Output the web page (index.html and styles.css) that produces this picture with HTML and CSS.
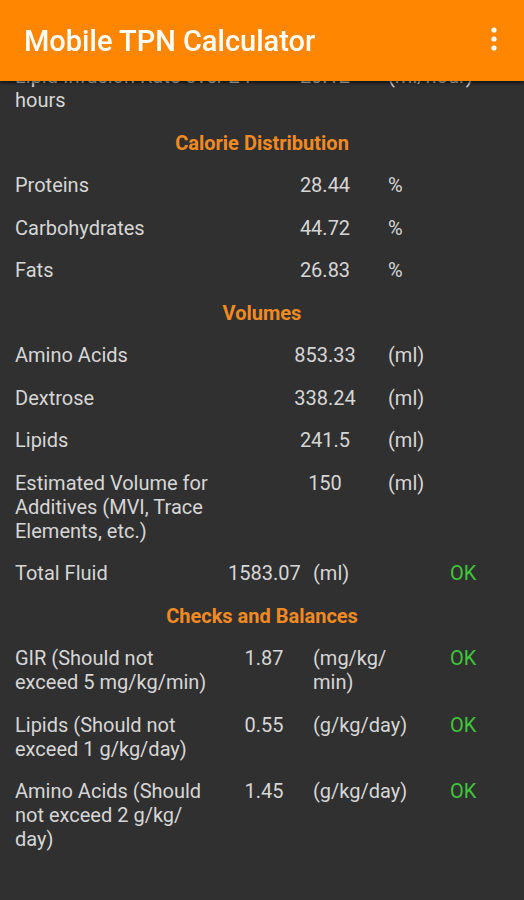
FILE: index.html
```html
<!DOCTYPE html>
<html lang="en">

<head>
  <meta charset="UTF-8">
  <meta name="viewport" content="width=device-width, initial-scale=1.0">
  <title>Mobile TPN Calculator</title>
  <link rel="stylesheet" href="styles.css">
</head>

<body>
  <header class="appbar">
    <h1 class="appbar-title">Mobile TPN Calculator</h1>
    <svg class="menu" width="8" height="26" viewBox="0 0 8 26">
      <circle cx="4" cy="4" r="2.6" fill="#fff" />
      <circle cx="4" cy="13" r="2.6" fill="#fff" />
      <circle cx="4" cy="22" r="2.6" fill="#fff" />
    </svg>
  </header>

  <main class="results">
    <!-- scrolled: first row sits under the app bar -->
    <div class="table three">
      <div class="label">Lipid Infusion Rate over 24 hours</div>
      <div class="value">20.12</div>
      <div class="unit">(ml/hour)</div>
    </div>

    <h2 class="section">Calorie Distribution</h2>
    <div class="table three">
      <div class="label">Proteins</div>
      <div class="value">28.44</div>
      <div class="unit">%</div>

      <div class="label">Carbohydrates</div>
      <div class="value">44.72</div>
      <div class="unit">%</div>

      <div class="label">Fats</div>
      <div class="value">26.83</div>
      <div class="unit">%</div>
    </div>

    <h2 class="section">Volumes</h2>
    <div class="table three">
      <div class="label">Amino Acids</div>
      <div class="value">853.33</div>
      <div class="unit">(ml)</div>

      <div class="label">Dextrose</div>
      <div class="value">338.24</div>
      <div class="unit">(ml)</div>

      <div class="label">Lipids</div>
      <div class="value">241.5</div>
      <div class="unit">(ml)</div>

      <div class="label">Estimated Volume for Additives (MVI, Trace Elements, etc.)</div>
      <div class="value">150</div>
      <div class="unit">(ml)</div>
    </div>

    <div class="table four">
      <div class="label">Total Fluid</div>
      <div class="value">1583.07</div>
      <div class="unit">(ml)</div>
      <div class="status">OK</div>
    </div>

    <h2 class="section">Checks and Balances</h2>
    <div class="table four">
      <div class="label">GIR (Should not exceed 5 mg/kg/min)</div>
      <div class="value">1.87</div>
      <div class="unit">(mg/kg/<wbr>min)</div>
      <div class="status">OK</div>

      <div class="label">Lipids (Should not exceed 1 g/kg/day)</div>
      <div class="value">0.55</div>
      <div class="unit">(g/kg/day)</div>
      <div class="status">OK</div>

      <div class="label">Amino Acids (Should not exceed 2 g/kg/<wbr>day)</div>
      <div class="value">1.45</div>
      <div class="unit">(g/kg/day)</div>
      <div class="status">OK</div>
    </div>
  </main>
</body>

</html>
```

FILE: styles.css
```css
html,
body {
  margin: 0;
  background-color: #303030;
}

body {
  font-family: Roboto, "Liberation Sans", sans-serif;
  color: #d6d6d6;
}

.appbar {
  position: fixed;
  top: 0;
  left: 0;
  right: 0;
  z-index: 2;
  height: 81px;
  display: flex;
  align-items: center;
  justify-content: space-between;
  padding: 0 26px 0 24px;
  background-color: #ff8600;
  box-shadow: 0 2px 3px rgba(0, 0, 0, 0.6);
}

.appbar-title {
  margin: 0;
  font-size: 29px;
  font-weight: 500;
  color: #fff;
}

.menu {
  display: block;
  margin-top: -4px;
}

.results {
  padding: 55px 15px 40px;
}

.table {
  display: grid;
  font-size: 20px;
  line-height: 24px;
}

.table > div {
  padding: 9.25px 0;
}

.three {
  grid-template-columns: 250px 120px 1fr;
}

.three .unit {
  padding-left: 3px;
}

.four {
  grid-template-columns: 205px 80px 115px 1fr;
}

.four .value {
  padding-left: 8px;
}

.four .unit {
  padding-left: 13px;
}

.value {
  text-align: center;
}

.four .status {
  padding-left: 35px;
  color: #3fc63a;
}

.section {
  margin: 0;
  padding: 9.25px 0;
  font-size: 20px;
  line-height: 24px;
  font-weight: 700;
  text-align: center;
  color: #f28a22;
}
```
